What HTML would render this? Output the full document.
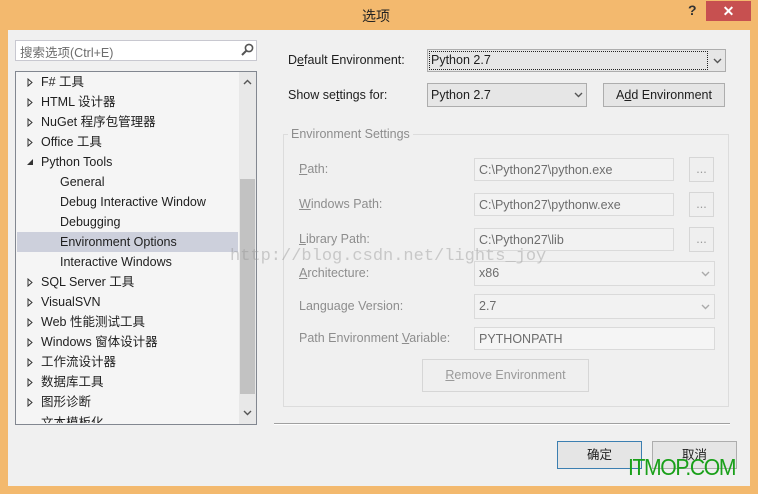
<!DOCTYPE html>
<html><head><meta charset="utf-8">
<style>
*{box-sizing:border-box;margin:0;padding:0}
body{width:758px;height:494px;overflow:hidden;background:#f3b96e;font-family:"Liberation Sans","Noto Sans CJK SC",sans-serif;font-size:12.5px;color:#1e1e1e;position:relative}
.a{position:absolute;white-space:nowrap}
.client{position:absolute;left:8px;top:30px;width:742px;height:456px;background:#f0f0f0}
.dis{color:#8d8d8d}
.field{position:absolute;border:1px solid #dadada;background:#f2f2f2;color:#6d6d6d;padding:4px 4px;line-height:14px}
.btn{position:absolute;border:1px solid #adadad;background:#e5e5e5;text-align:center}
.dbtn{position:absolute;border:1px solid #d6d6d6;background:#efefef;color:#9a9a9a;text-align:center}
.tri{position:absolute;width:6px;height:9px}
.row{position:absolute;left:41px;height:20px;line-height:20px}
.chev{position:absolute;width:9px;height:6px}
</style></head><body>
<div class="a" style="left:362px;top:6px;font-size:14px;color:#222">选项</div>
<div class="a" style="left:688px;top:2px;font-size:14px;font-weight:bold;color:#333">?</div>
<div class="a" style="left:706px;top:1px;width:45px;height:20px;background:#c75050;color:#fff;text-align:center;font-size:14px;line-height:20px;font-weight:bold">✕</div>
<div class="client"></div>

<div class="a" style="left:15px;top:40px;width:242px;height:21px;border:1px solid #c8c8d0;background:#fff"></div>
<div class="a" style="left:20px;top:42px;color:#6d6d6d;font-size:12.5px">搜索选项(Ctrl+E)</div>
<svg class="a" style="left:240px;top:43px" width="14" height="14"><circle cx="9" cy="5" r="3.6" fill="none" stroke="#555" stroke-width="1.6"/><line x1="6.5" y1="7.5" x2="2" y2="12" stroke="#555" stroke-width="2"/></svg>

<div class="a" style="left:15px;top:71px;width:242px;height:354px;border:1px solid #828790;background:#f5f5f5;overflow:hidden">
 <div class="a" style="left:223px;top:0;width:17px;height:352px;background:#e8e8e8"></div>
 <div class="a" style="left:224px;top:107px;width:15px;height:215px;background:#c2c2c2"></div>
 <div class="a" style="left:1px;top:160px;width:221px;height:20px;background:#cdd0dc"></div>
</div>
<svg class="chev" style="left:243px;top:79px"><polyline points="1,5 4.5,1.5 8,5" fill="none" stroke="#555" stroke-width="1.4"/></svg>
<svg class="chev" style="left:243px;top:410px"><polyline points="1,1 4.5,4.5 8,1" fill="none" stroke="#555" stroke-width="1.4"/></svg>

<svg width="0" height="0" style="position:absolute"><defs><polygon id="t" points="1,1 5,4.5 1,8" fill="none" stroke="#333" stroke-width="1"/></defs></svg>
<svg class="tri" style="left:27px;top:78px"><use href="#t"/></svg><div class="row" style="top:72px">F# 工具</div>
<svg class="tri" style="left:27px;top:98px"><use href="#t"/></svg><div class="row" style="top:92px">HTML 设计器</div>
<svg class="tri" style="left:27px;top:118px"><use href="#t"/></svg><div class="row" style="top:112px">NuGet 程序包管理器</div>
<svg class="tri" style="left:27px;top:138px"><use href="#t"/></svg><div class="row" style="top:132px">Office 工具</div>
<svg class="a" style="left:26px;top:158px" width="8" height="8"><polygon points="7,1 7,7 1,7" fill="#333"/></svg><div class="row" style="top:152px">Python Tools</div>
<div class="row" style="top:172px;left:60px">General</div>
<div class="row" style="top:192px;left:60px">Debug Interactive Window</div>
<div class="row" style="top:212px;left:60px">Debugging</div>
<div class="row" style="top:232px;left:60px">Environment Options</div>
<div class="row" style="top:252px;left:60px">Interactive Windows</div>
<svg class="tri" style="left:27px;top:278px"><use href="#t"/></svg><div class="row" style="top:272px">SQL Server 工具</div>
<svg class="tri" style="left:27px;top:298px"><use href="#t"/></svg><div class="row" style="top:292px">VisualSVN</div>
<svg class="tri" style="left:27px;top:318px"><use href="#t"/></svg><div class="row" style="top:312px">Web 性能测试工具</div>
<svg class="tri" style="left:27px;top:338px"><use href="#t"/></svg><div class="row" style="top:332px">Windows 窗体设计器</div>
<svg class="tri" style="left:27px;top:358px"><use href="#t"/></svg><div class="row" style="top:352px">工作流设计器</div>
<svg class="tri" style="left:27px;top:378px"><use href="#t"/></svg><div class="row" style="top:372px">数据库工具</div>
<svg class="tri" style="left:27px;top:398px"><use href="#t"/></svg><div class="row" style="top:392px">图形诊断</div>
<div class="a" style="left:41px;top:413px;height:10px;overflow:hidden;line-height:20px">文本模板化</div>

<div class="a" style="left:288px;top:53px">D<u>e</u>fault Environment:</div>
<div class="a" style="left:427px;top:49px;width:299px;height:23px;border:1px solid #adadad;background:#e6e6e6"></div>
<div class="a" style="left:429px;top:51px;width:279px;height:19px;border:1px dotted #222;padding-left:1px;line-height:17px">Python 2.7</div>
<svg class="chev" style="left:713px;top:58px"><polyline points="1,1 4.5,4.5 8,1" fill="none" stroke="#555" stroke-width="1.4"/></svg>

<div class="a" style="left:288px;top:88px">Show se<u>t</u>tings for:</div>
<div class="a" style="left:427px;top:83px;width:160px;height:24px;border:1px solid #adadad;background:#e6e6e6;padding:4px 3px;line-height:14px">Python 2.7</div>
<svg class="chev" style="left:574px;top:92px"><polyline points="1,1 4.5,4.5 8,1" fill="none" stroke="#555" stroke-width="1.4"/></svg>
<div class="btn" style="left:603px;top:83px;width:122px;height:24px;line-height:22px">A<u>d</u>d Environment</div>

<div class="a" style="left:283px;top:134px;width:446px;height:273px;border:1px solid #dcdcdc"></div>
<div class="a dis" style="left:288px;top:127px;background:#f0f0f0;padding:0 3px">Environment Settings</div>

<div class="a dis" style="left:299px;top:162px"><u>P</u>ath:</div>
<div class="field" style="left:474px;top:158px;width:200px;height:23px">C:\Python27\python.exe</div>
<div class="dbtn" style="left:689px;top:157px;width:25px;height:25px;line-height:22px">...</div>
<div class="a dis" style="left:299px;top:197px"><u>W</u>indows Path:</div>
<div class="field" style="left:474px;top:193px;width:200px;height:23px">C:\Python27\pythonw.exe</div>
<div class="dbtn" style="left:689px;top:192px;width:25px;height:25px;line-height:22px">...</div>
<div class="a dis" style="left:299px;top:232px"><u>L</u>ibrary Path:</div>
<div class="field" style="left:474px;top:228px;width:200px;height:23px">C:\Python27\lib</div>
<div class="dbtn" style="left:689px;top:227px;width:25px;height:25px;line-height:22px">...</div>
<div class="a dis" style="left:299px;top:266px"><u>A</u>rchitecture:</div>
<div class="field" style="left:474px;top:261px;width:241px;height:25px">x86</div>
<svg class="chev" style="left:701px;top:271px"><polyline points="1,1 4.5,4.5 8,1" fill="none" stroke="#aaa" stroke-width="1.4"/></svg>
<div class="a dis" style="left:299px;top:299px">Language Version:</div>
<div class="field" style="left:474px;top:294px;width:241px;height:25px">2.7</div>
<svg class="chev" style="left:701px;top:304px"><polyline points="1,1 4.5,4.5 8,1" fill="none" stroke="#aaa" stroke-width="1.4"/></svg>
<div class="a dis" style="left:299px;top:331px">Path Environment <u>V</u>ariable:</div>
<div class="field" style="left:474px;top:327px;width:241px;height:23px;background:#f5f5f5">PYTHONPATH</div>
<div class="dbtn" style="left:422px;top:359px;width:167px;height:33px;line-height:31px"><u>R</u>emove Environment</div>

<div class="a" style="left:274px;top:423px;width:456px;height:1px;background:#a0a0a0"></div>
<div class="a" style="left:274px;top:424px;width:456px;height:1px;background:#fff"></div>

<div class="a" style="left:230px;top:247px;font-family:'Liberation Mono',monospace;font-size:17px;color:rgba(150,150,150,0.45)">http://blog.csdn.net/lights_joy</div>

<div class="btn" style="left:557px;top:441px;width:85px;height:28px;line-height:26px;border-color:#3c7fb1;background:#e5e5e5">确定</div>
<div class="btn" style="left:652px;top:441px;width:85px;height:28px;line-height:26px">取消</div>
<div class="a" style="left:628px;top:454px;font-size:23px;color:#1aa01a;letter-spacing:-1.5px;transform:scaleX(0.92);transform-origin:left">ITMOP.COM</div>
</body></html>
